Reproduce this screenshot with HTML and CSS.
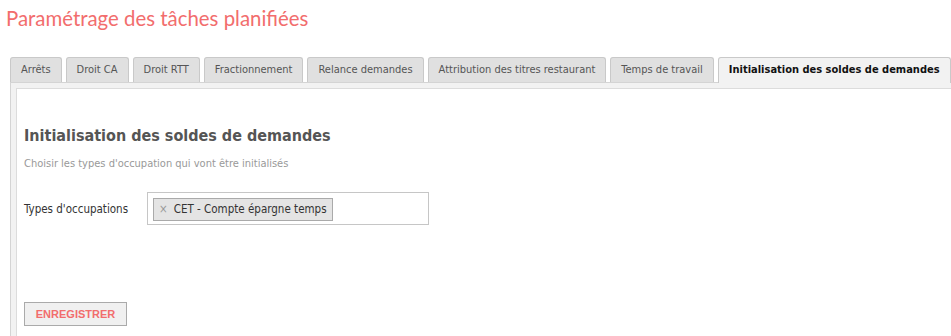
FILE: index.html
```html
<!DOCTYPE html>
<html lang="fr">
  <head>
    <meta charset="UTF-8" />
    <meta name="viewport" content="width=device-width, initial-scale=1.0" />
    <title>Paramétrage des tâches planifiées</title>
    <link rel="stylesheet" href="styles.css">
  </head>
  <body>
    <h1 class="page-title">Paramétrage des tâches planifiées</h1>

    <ul class="tabs">
      <li class="tab">Arrêts</li>
      <li class="tab">Droit CA</li>
      <li class="tab">Droit RTT</li>
      <li class="tab">Fractionnement</li>
      <li class="tab">Relance demandes</li>
      <li class="tab">Attribution des titres restaurant</li>
      <li class="tab">Temps de travail</li>
      <li class="tab active">Initialisation des soldes de demandes</li>
    </ul>

    <div class="panel">
      <div class="panel-inner">
        <h2 class="section-title">Initialisation des soldes de demandes</h2>
        <p class="hint">Choisir les types d'occupation qui vont être initialisés</p>

        <div class="field">
          <label class="field-label">Types d'occupations</label>
          <div class="select-box">
            <span class="tag"><span class="tag-remove">×</span>CET - Compte épargne temps</span>
          </div>
        </div>

        <button class="btn-save">ENREGISTRER</button>
      </div>
    </div>
  </body>
</html>
```

FILE: styles.css
```css
body {
  margin: 0;
  background: #fff;
  font-family: "DejaVu Sans Condensed", "DejaVu Sans", sans-serif;
  overflow: hidden;
}
.page-title {
  margin: 0;
  padding: 4px 0 0 6px;
  font-family: Lato, sans-serif;
  font-weight: normal;
  font-size: 20.4px;
  line-height: 28px;
  color: #f26d6d;
}
.tabs {
  list-style: none;
  margin: 25px 0 0 10px;
  padding: 0;
  display: flex;
  gap: 4px;
  position: relative;
  z-index: 1;
}
.tab {
  height: 24px;
  line-height: 24px;
  padding: 0 10px;
  border: 1px solid #c9c9c9;
  border-bottom: none;
  border-radius: 3px 3px 0 0;
  background: #e0e0e0;
  color: #555;
  font-size: 11px;
  white-space: nowrap;
}
.tab.active {
  height: 25px;
  margin-bottom: -1px;
  background: #f2f2f2;
  color: #111;
  font-weight: bold;
}
.panel {
  margin-left: 10px;
  height: 260px;
  border: 1px solid #d4d4d4;
  border-right: none;
  background: #f2f2f2;
  padding: 5px 0 0 5px;
}
.panel-inner {
  height: 100%;
  background: #fff;
  border-left: 1px solid #dcdcdc;
  border-top: 1px solid #dcdcdc;
  padding: 0 0 0 7px;
}
.section-title {
  margin: 0;
  padding-top: 37px;
  font-family: "DejaVu Sans Condensed", sans-serif;
  font-size: 16px;
  line-height: 20px;
  color: #555;
}
.hint {
  margin: 11px 0 0;
  font-size: 11px;
  color: #999;
}
.field {
  display: flex;
  align-items: center;
  margin-top: 22px;
}
.field-label {
  width: 123px;
  font-size: 11.5px;
  color: #333;
}
.select-box {
  width: 282px;
  height: 33px;
  border: 1px solid #c6c6c6;
  padding: 5px;
  box-sizing: border-box;
  display: flex;
  align-items: flex-start;
}
.tag {
  height: 21px;
  line-height: 21px;
  padding: 0 5px;
  background: #e4e4e4;
  border: 1px solid #aaa;
  font-size: 11.5px;
  color: #333;
  white-space: nowrap;
}
.tag-remove {
  color: #999;
  margin-right: 6px;
}
.btn-save {
  display: block;
  margin-top: 77px;
  width: 103px;
  height: 24px;
  padding: 0;
  background: #f0f0f0;
  border: 1px solid #aaa;
  font-family: "Liberation Sans", Arial, sans-serif;
  font-weight: bold;
  font-size: 11px;
  color: #f26d6d;
}
```
